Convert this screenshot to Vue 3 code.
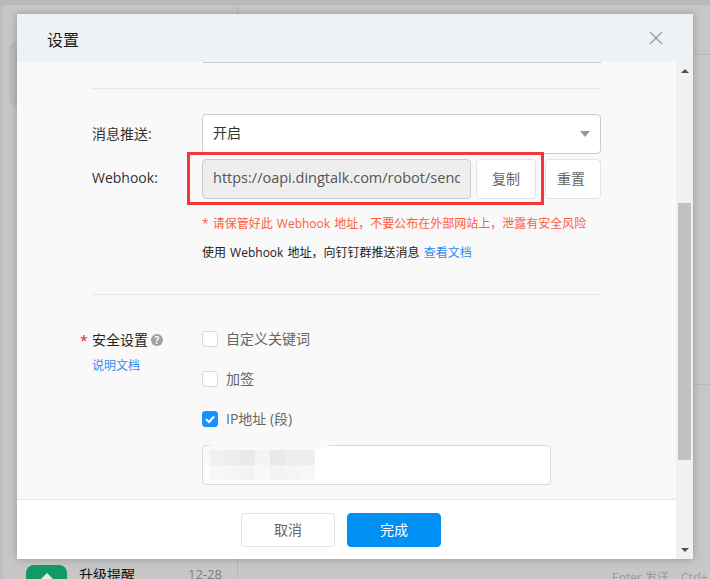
<script setup>
import { ref } from 'vue'

const webhook = ref('https://oapi.dingtalk.com/robot/send')
const securityOptions = [
  { label: '自定义关键词', checked: false },
  { label: '加签', checked: false },
  { label: 'IP地址 (段)', checked: true }
]
// mosaic over the redacted ip, two rows of 15px cells
const mosaic = [
  '#f0f0f0', '#ededed', '#e9e9e9', '#f4f4f5', '#e9e9e9', '#eeeeee', '#efefef',
  '#f7f7f7', '#f5f5f5', '#f3f3f3', '#f8f8f9', '#f3f3f3', '#f5f5f5', '#f7f7f7'
]
</script>

<template>
  <div class="page">
    <div class="topstrip"></div>
    <div class="columns">
      <aside class="sidebar">
        <div class="selected-item"></div>
        <div class="list-item">
          <div class="item-icon"><span class="item-arrow"></span></div>
          <span class="item-name">升级提醒</span>
          <span class="item-date">12-28</span>
        </div>
      </aside>
      <main class="chat">
        <div class="chat-head"></div>
        <div class="chat-foot">
          <span class="send-hint">Enter 发送　Ctrl+</span>
        </div>
      </main>
    </div>

    <section class="modal">
      <header class="modal-head">
        <span class="modal-title">设置</span>
        <svg class="close" width="14" height="14" viewBox="0 0 14 14">
          <path d="M1 1 L13 13 M13 1 L1 13" stroke="#8795a8" stroke-width="1.1" fill="none" />
        </svg>
      </header>
      <div class="modal-main">
        <div class="modal-left">
          <div class="modal-body">
            <div class="cut-input"></div>
            <div class="divider first"></div>

            <div class="row push-row">
              <label class="row-label">消息推送:</label>
              <div class="select">
                <span>开启</span>
                <i class="caret"></i>
              </div>
            </div>

            <div class="row hook-row">
              <label class="row-label">Webhook:</label>
              <div class="hook-input"><span>{{ webhook }}</span></div>
              <button class="btn copy">复制</button>
              <button class="btn reset">重置</button>
              <div class="red-box"></div>
            </div>

            <p class="warn">* 请保管好此 Webhook 地址，不要公布在外部网站上，泄露有安全风险</p>
            <p class="usage">使用 Webhook 地址，向钉钉群推送消息 <a class="link">查看文档</a></p>

            <div class="divider second"></div>

            <div class="security">
              <div class="sec-label">
                <div class="sec-title">
                  <span class="star">*</span>安全设置
                  <span class="help">?</span>
                </div>
                <a class="link doc">说明文档</a>
              </div>
              <div class="sec-options">
                <label v-for="opt in securityOptions" :key="opt.label" class="check">
                  <span class="box" :class="{ on: opt.checked }">
                    <svg v-if="opt.checked" width="16" height="16" viewBox="0 0 16 16">
                      <path d="M4 8.2 L7 11 L12 5.5" stroke="#fff" stroke-width="2" fill="none" />
                    </svg>
                  </span>
                  <span class="check-text">{{ opt.label }}</span>
                </label>
                <div class="ip-input">
                  <div class="smudge"></div>
                  <div class="mosaic">
                    <i v-for="(c, i) in mosaic" :key="i" :style="{ background: c }"></i>
                  </div>
                </div>
              </div>
            </div>
          </div>
          <footer class="modal-foot">
            <button class="foot-btn cancel">取消</button>
            <button class="foot-btn done">完成</button>
          </footer>
        </div>
        <div class="scrollbar">
          <i class="arrow up"></i>
          <div class="track"><div class="thumb"></div></div>
          <i class="arrow down"></i>
        </div>
      </div>
    </section>
  </div>
</template>

<style>
html, body {
  margin: 0;
  overflow: hidden;
}
</style>

<style scoped>
.page {
  position: relative;
  width: 710px;
  height: 579px;
  overflow: hidden;
  display: flex;
  flex-direction: column;
  background: #c7c7c7;
  font-family: "Open Sans", "Noto Sans CJK SC", sans-serif;
  font-size: 14px;
  color: #333;
}

.topstrip {
  height: 5px;
  flex: none;
  background: #b9b9b9;
}

.columns {
  flex: 1;
  min-height: 0;
  display: flex;
  border-left: 3px solid #bdbdbd;
}

.sidebar {
  width: 234px;
  border-right: 1px solid #b7b7b7;
  display: flex;
  flex-direction: column;
  padding-top: 36px;
  overflow: hidden;
}

.selected-item {
  width: 60px;
  height: 65px;
  flex: none;
  margin-left: 6px;
  background: #bcbcbc;
  border-radius: 8px 0 0 8px;
}

.list-item {
  margin-top: 459px;
  flex: none;
  display: flex;
  align-items: flex-start;
  padding-left: 23px;
}

.item-icon {
  width: 41px;
  height: 41px;
  background: #129a66;
  border-radius: 8px;
  display: flex;
  justify-content: center;
  padding-top: 8px;
  box-sizing: border-box;
  flex: none;
}

.item-arrow {
  width: 0;
  height: 0;
  border-left: 7px solid transparent;
  border-right: 7px solid transparent;
  border-bottom: 7px solid #e8e8e8;
}

.item-name {
  margin-left: 12px;
  font-size: 14px;
  line-height: 20px;
  color: #111;
}

.item-date {
  margin-left: 53px;
  font-size: 13px;
  line-height: 18px;
  color: #808080;
}

.chat {
  flex: 1;
  display: flex;
  flex-direction: column;
}

.chat-head {
  height: 49px;
  border-bottom: 1px solid #b7b7b7;
}

.chat-foot {
  margin-top: auto;
  height: 194px;
  border-top: 1px solid #b9b9b9;
  position: relative;
}

.send-hint {
  position: absolute;
  left: 374px;
  bottom: -7px;
  font-size: 12px;
  color: #999;
  white-space: nowrap;
}

/* dialog floating over the app */
.modal {
  position: absolute;
  left: 17px;
  top: 14px;
  width: 676px;
  height: 545px;
  display: flex;
  flex-direction: column;
  background: #fff;
  box-shadow: 0 0 8px rgba(0, 0, 0, 0.25);
}

.modal-head {
  height: 48px;
  flex: none;
  background: #eef1f5;
  display: flex;
  align-items: center;
  justify-content: space-between;
  padding: 0 30px;
}

.modal-title {
  font-size: 16px;
  color: #1a1a1a;
  margin-top: 2px;
}

.close {
  margin-top: -1px;
}

.modal-main {
  flex: 1;
  min-height: 0;
  display: flex;
}

.modal-left {
  flex: 1;
  min-width: 0;
  display: flex;
  flex-direction: column;
}

.modal-body {
  flex: 1;
  min-height: 0;
  overflow: hidden;
  background: #f9f9f9;
  padding-left: 75px;
  padding-right: 75px;
}

.cut-input {
  height: 1px;
  margin-left: 111px;
  background: #c8c8c8;
}

.divider {
  height: 1px;
  background: #e6e6e6;
}

.divider.first {
  margin-top: 25px;
}

.divider.second {
  margin-top: 32px;
}

.row {
  display: flex;
  align-items: center;
  position: relative;
}

.row-label {
  width: 110px;
  flex: none;
  font-size: 14px;
  color: #333;
  padding-bottom: 3px;
}

.push-row {
  margin-top: 25px;
  height: 40px;
}

.select {
  flex: 1;
  height: 40px;
  box-sizing: border-box;
  border: 1px solid #ccc;
  border-radius: 4px;
  background: #fff;
  display: flex;
  align-items: center;
  justify-content: space-between;
  padding: 0 10px 4px;
  font-size: 14px;
}

.caret {
  width: 0;
  height: 0;
  margin-top: 4px;
  border-left: 5px solid transparent;
  border-right: 5px solid transparent;
  border-top: 6px solid #999;
}

.hook-row {
  margin-top: 5px;
  height: 40px;
}

.hook-input {
  width: 269px;
  height: 40px;
  box-sizing: border-box;
  border: 1px solid #ccc;
  border-radius: 4px;
  background: #eee;
  padding: 0 10px;
  line-height: 35px;
  font-size: 14.5px;
  color: #555;
  overflow: hidden;
  white-space: nowrap;
  flex: none;
}

.hook-input span {
  display: block;
  overflow: hidden;
}

.btn {
  height: 40px;
  box-sizing: border-box;
  border: 1px solid #e4e4e4;
  border-radius: 4px;
  background: #fff;
  font-family: inherit;
  font-size: 14px;
  color: #666;
  padding: 0 0 3px;
  flex: none;
}

.copy {
  width: 60px;
  margin-left: 5px;
}

.reset {
  width: 56px;
  margin-left: 9px;
  padding-right: 4px;
}

.red-box {
  position: absolute;
  left: 95px;
  top: -7px;
  width: 357px;
  height: 53px;
  box-sizing: border-box;
  border: 3px solid #f6373a;
  pointer-events: none;
}

.warn,
.usage {
  margin: 0;
  padding-left: 110px;
  font-size: 12px;
  line-height: 18px;
  word-spacing: 1px;
}

.warn {
  margin-top: 16px;
  color: #ff5c3c;
}

.usage {
  margin-top: 11px;
  color: #222;
}

.link {
  color: #2f8cf0;
  text-decoration: none;
}

.security {
  display: flex;
  margin-top: 36px;
}

.sec-label {
  width: 110px;
  flex: none;
}

.sec-title {
  position: relative;
  font-size: 14px;
  line-height: 18px;
  color: #222;
  display: flex;
  align-items: center;
}

.star {
  position: absolute;
  left: -12px;
  top: 1px;
  color: #e8262d;
}

.help {
  width: 12px;
  height: 12px;
  margin-left: 3px;
  border-radius: 50%;
  background: #a0a0a0;
  color: #fff;
  font-size: 10px;
  font-weight: 700;
  line-height: 12px;
  text-align: center;
}

.doc {
  display: block;
  margin-top: 8px;
  font-size: 12px;
  line-height: 18px;
}

.sec-options {
  flex: 1;
  display: flex;
  flex-direction: column;
}

.check {
  display: flex;
  align-items: center;
  height: 16px;
  margin-bottom: 24px;
}

.box {
  width: 16px;
  height: 16px;
  box-sizing: border-box;
  border: 1px solid #d9d9d9;
  border-radius: 3px;
  background: #fff;
  flex: none;
  position: relative;
}

.box.on {
  background: #1890ff;
  border-color: #1890ff;
}

.box svg {
  position: absolute;
  left: -1px;
  top: -1px;
}

.check-text {
  margin-left: 8px;
  margin-top: -2px;
  font-size: 14px;
  color: #666;
}

.ip-input {
  position: relative;
  width: 349px;
  height: 40px;
  margin-top: -6px;
  box-sizing: border-box;
  border: 1px solid #d9d9d9;
  border-radius: 4px;
  background: #fff;
}

/* redaction smear on top of the input */
.smudge {
  position: absolute;
  left: 0;
  top: -1px;
  width: 112px;
  height: 33px;
  background: #f9f9f9;
  border-radius: 10px 0 0 40px / 6px 0 0 24px;
}

.smudge::after {
  content: "";
  position: absolute;
  left: 100px;
  top: 0;
  width: 26px;
  height: 5px;
  background: #f9f9f9;
  border-radius: 0 0 100% 0;
}

.mosaic {
  position: absolute;
  left: 7px;
  top: 4px;
  display: grid;
  grid-template-columns: repeat(7, 15px);
  grid-auto-rows: 15px;
}

.modal-foot {
  height: 60px;
  flex: none;
  box-sizing: border-box;
  border-top: 1px solid #e5e5e5;
  background: #fff;
  display: flex;
  justify-content: center;
  align-items: flex-start;
  gap: 12px;
  padding-top: 13px;
  padding-right: 11px;
}

.foot-btn {
  width: 94px;
  height: 34px;
  box-sizing: border-box;
  border-radius: 4px;
  font-family: inherit;
  font-size: 14px;
  padding: 0 0 3px;
}

.cancel {
  background: #fff;
  border: 1px solid #e4e4e4;
  color: #666;
}

.done {
  background: #0090f3;
  border: 1px solid #0090f3;
  color: #fff;
}

.scrollbar {
  width: 17px;
  flex: none;
  background: #f1f1f1;
  display: flex;
  flex-direction: column;
  align-items: center;
}

.track {
  flex: 1;
  width: 100%;
  padding: 0 2px;
  box-sizing: border-box;
}

.thumb {
  height: 257px;
  margin-top: 124px;
  background: #c1c1c1;
}

.arrow {
  width: 0;
  height: 0;
  flex: none;
  border-left: 4px solid transparent;
  border-right: 4px solid transparent;
}

.arrow.up {
  margin-top: 7px;
  margin-bottom: 6px;
  border-bottom: 4px solid #505050;
}

.arrow.down {
  margin-top: 6px;
  margin-bottom: 7px;
  border-top: 4px solid #505050;
}
</style>
